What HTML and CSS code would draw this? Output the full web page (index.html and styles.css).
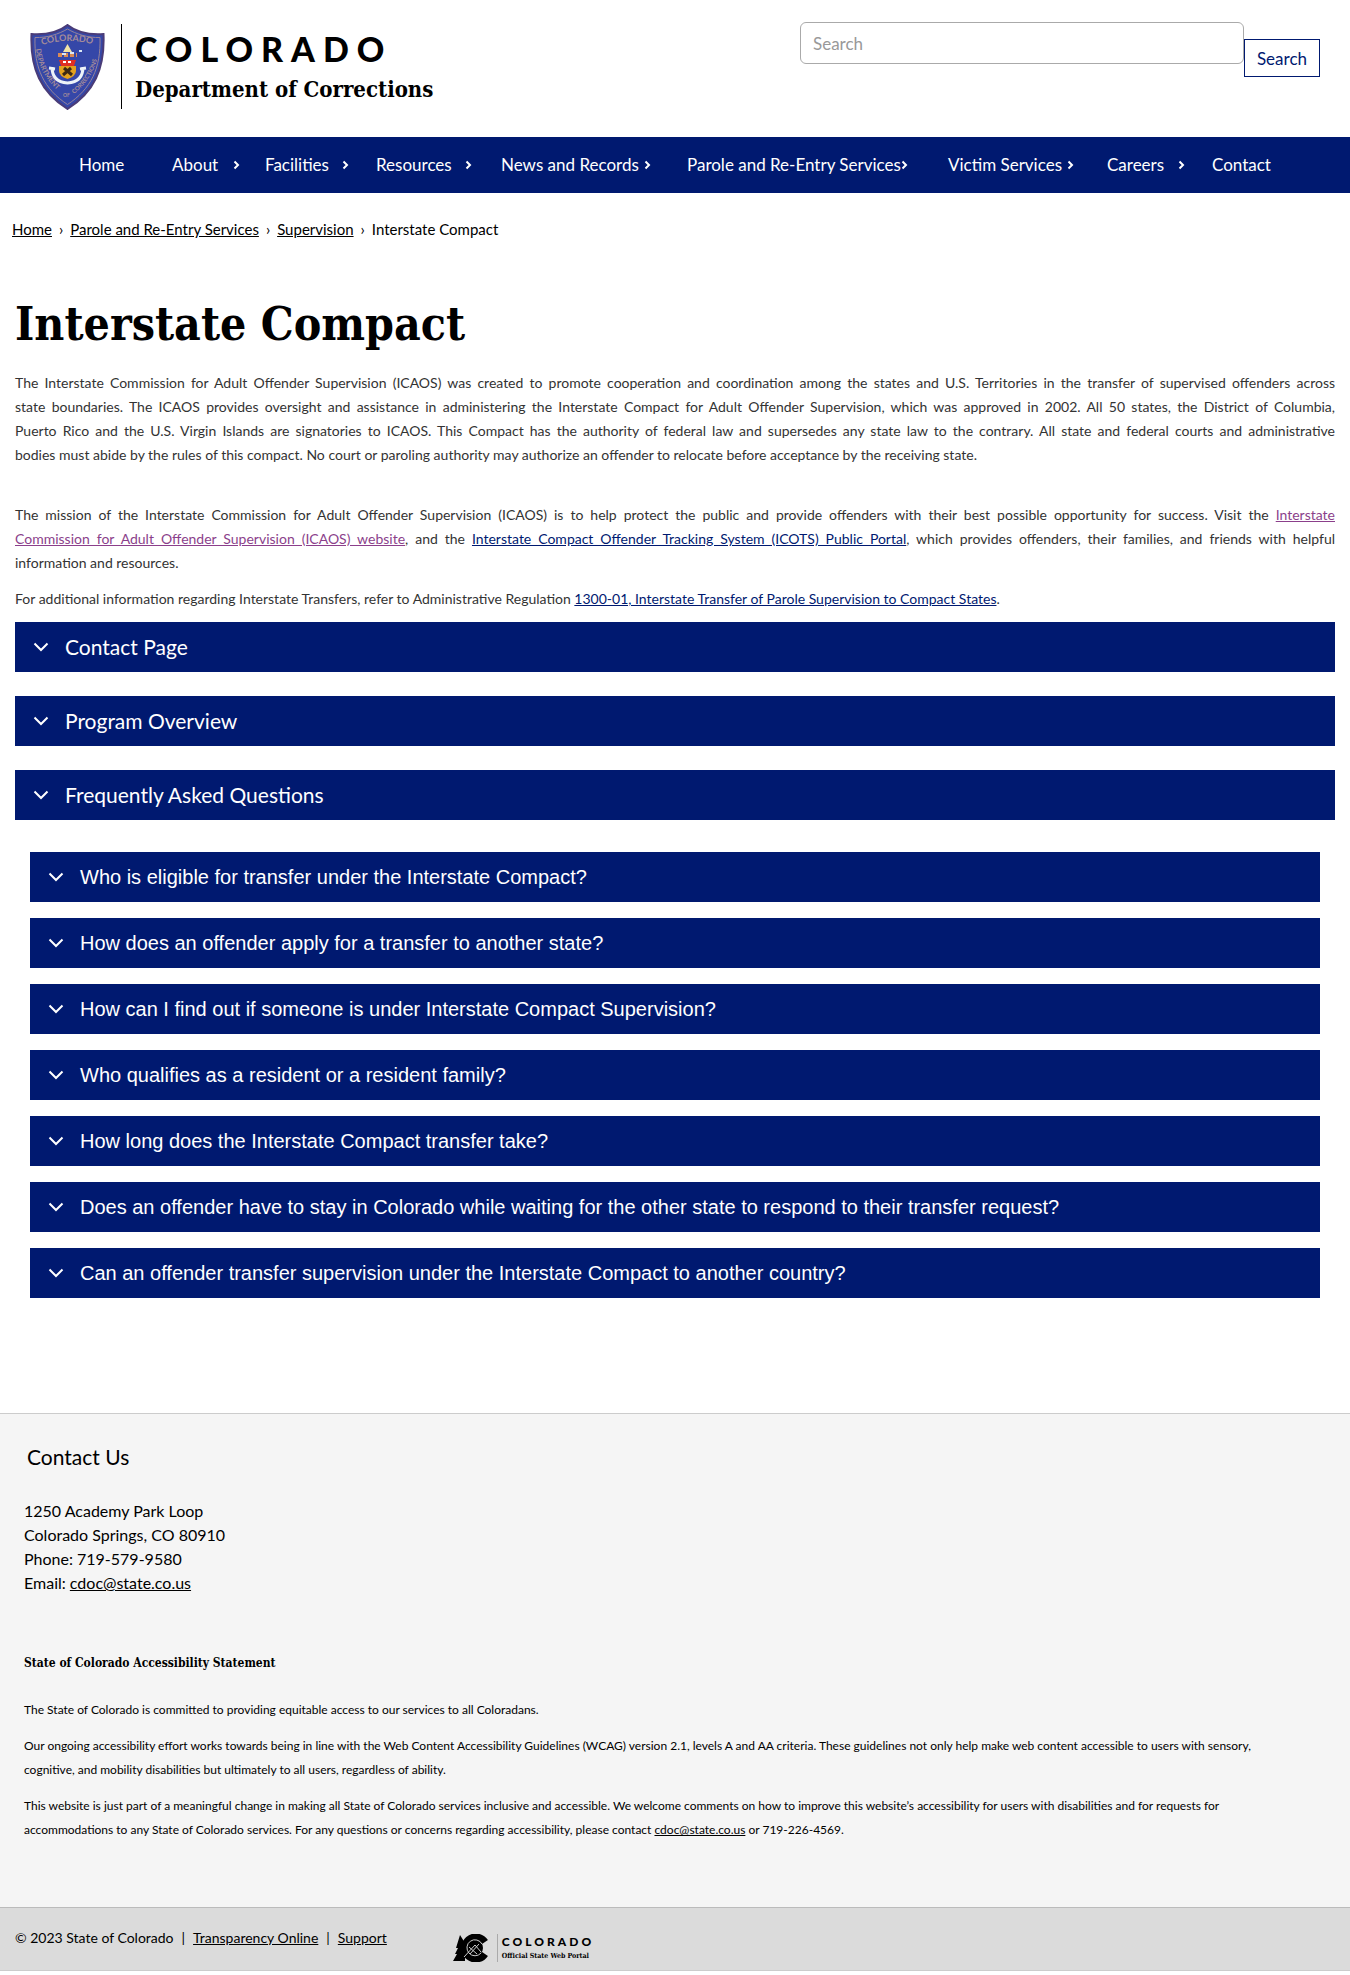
FILE: index.html
```html
<!DOCTYPE html>
<html lang="en">
<head>
<meta charset="utf-8">
<meta name="viewport" content="width=device-width, initial-scale=1">
<title>Interstate Compact | Department of Corrections</title>
<link rel="stylesheet" href="styles.css">
</head>
<body>
<svg class="defs" aria-hidden="true">
  <symbol id="right" viewBox="0 0 7 10"><path d="M1.500 1.500 5 5 1.500 8.500" fill="none" stroke="currentColor" stroke-width="2"/></symbol>
  <symbol id="down" viewBox="0 0 16 10"><path d="M1.500 1.500 8 8 14.500 1.500" fill="none" stroke="currentColor" stroke-width="2"/></symbol>
</svg>
<header class="site-header">
  <a class="brand" href="#">
    <svg class="shield" viewBox="0 0 75 86" role="img" aria-label="Department of Corrections badge">
      <path d="M37.500 1C45 7 58 11 73.500 10 75 45 64 68 37.500 85 11 68 0 45 1.500 10 17 11 30 7 37.500 1Z" fill="#3547a8" stroke="#4a3c78" stroke-width="2"/>
      <path d="M37.500 5C46 10 58 14 70 13.500 71 44 61 65 37.500 80.500 14 65 4 44 5 13.500 17 14 29 10 37.500 5Z" fill="none" stroke="#96839a"/>
      <path id="arc-top" d="M12 21Q37.500 13 65 21" fill="none"/>
      <path id="arc-left" d="M6 25Q9 52 32 70" fill="none"/>
      <path id="arc-right" d="M44 70Q66 52 69 25" fill="none"/>
      <g class="shield-text">
        <text font-size="9"><textPath href="#arc-top">COLORADO</textPath></text>
        <text font-size="7"><textPath href="#arc-left">DEPARTMENT</textPath></text>
        <text font-size="6"><textPath href="#arc-right">CORRECTIONS</textPath></text>
        <text font-size="5" x="33" y="73">OF</text>
      </g>
      <path d="M37.500 20 42 28H33Z" fill="#f2e3a6"/>
      <path d="M28 31h19" stroke="#d98a55" stroke-width="4" stroke-dasharray="4 2"/>
      <path d="M32 30h4M40 29h4M49 27h3" stroke="#dce8f5" stroke-width="2"/>
      <path d="M29 36h17l-2 6H31Z" fill="#e02f22"/>
      <path d="M33 38h10" stroke="#fff" stroke-width="2" stroke-dasharray="3 2"/>
      <path d="M29 42h17v5q0 5-8.500 8Q29 52 29 47Z" fill="#e3a21e"/>
      <path d="M33 51l8-7M42 51l-8-7" stroke="#3c2a14" stroke-width="3"/>
      <path d="M22 43q0 15 15.500 16Q53 58 53 43M19 44l6 1M50 45l6-1" fill="none" stroke="#edf3f8" stroke-width="3"/>
    </svg>
    <span class="brand-text">
      <span class="wordmark">COLORADO</span>
      <span class="department">Department of Corrections</span>
    </span>
  </a>
  <form class="search">
    <input type="search" placeholder="Search" aria-label="Search">
    <button type="button">Search</button>
  </form>
</header>
<nav class="main-nav" aria-label="Main">
  <ul>
    <li><a href="#">Home</a></li>
    <li><a href="#">About</a><svg><use href="#right"/></svg></li>
    <li><a href="#">Facilities</a><svg><use href="#right"/></svg></li>
    <li><a href="#">Resources</a><svg><use href="#right"/></svg></li>
    <li><a href="#">News and Records</a><svg><use href="#right"/></svg></li>
    <li><a href="#">Parole and Re-Entry Services</a><svg><use href="#right"/></svg></li>
    <li><a href="#">Victim Services</a><svg><use href="#right"/></svg></li>
    <li><a href="#">Careers</a><svg><use href="#right"/></svg></li>
    <li><a href="#">Contact</a></li>
  </ul>
</nav>
<nav class="breadcrumb" aria-label="Breadcrumb">
  <a href="#">Home</a><span>›</span><a href="#">Parole and Re-Entry Services</a><span>›</span><a href="#">Supervision</a><span>›</span>Interstate Compact
</nav>
<main>
  <h1>Interstate Compact</h1>
  <div class="copy">
    <p class="lead">The Interstate Commission for Adult Offender Supervision (ICAOS) was created to promote cooperation and coordination among the states and U.S. Territories in the transfer of supervised offenders across state&nbsp;boundaries. The ICAOS provides oversight and assistance in administering the Interstate Compact for Adult Offender Supervision, which was approved in 2002. All 50 states, the District of Columbia, Puerto&nbsp;Rico&nbsp;and&nbsp;the U.S. Virgin Islands are signatories to ICAOS. This Compact has the authority of federal law and supersedes any state law to the contrary. All state and federal courts and administrative bodies&nbsp;must&nbsp;abide by the rules of this compact. No court or paroling authority may authorize an offender to relocate before acceptance by the receiving state.</p>
    <p>The mission of the Interstate Commission for Adult Offender Supervision (ICAOS) is to help protect the public and provide offenders with their best possible opportunity for success. Visit the <a class="seen" href="#">Interstate Commission&nbsp;for&nbsp;Adult Offender Supervision (ICAOS) website</a>, and the <a href="#">Interstate Compact Offender Tracking System (ICOTS) Public Portal</a>, which provides offenders, their families, and friends with helpful information&nbsp;and&nbsp;resources.</p>
    <p>For additional information regarding Interstate Transfers, refer to Administrative Regulation <a href="#">1300-01, Interstate Transfer of Parole Supervision to Compact States</a>.</p>
  </div>
  <div class="accordion">
    <button type="button"><svg><use href="#down"/></svg>Contact Page</button>
    <button type="button"><svg><use href="#down"/></svg>Program Overview</button>
    <button type="button" aria-expanded="true"><svg><use href="#down"/></svg>Frequently Asked Questions</button>
  </div>
  <div class="accordion faq">
    <button type="button"><svg><use href="#down"/></svg>Who is eligible for transfer under the Interstate Compact?</button>
    <button type="button"><svg><use href="#down"/></svg>How does an offender apply for a transfer to another state?</button>
    <button type="button"><svg><use href="#down"/></svg>How can I find out if someone is under Interstate Compact Supervision?</button>
    <button type="button"><svg><use href="#down"/></svg>Who qualifies as a resident or a resident family?</button>
    <button type="button"><svg><use href="#down"/></svg>How long does the Interstate Compact transfer take?</button>
    <button type="button"><svg><use href="#down"/></svg>Does an offender have to stay in Colorado while waiting for the other state to respond to their transfer request?</button>
    <button type="button"><svg><use href="#down"/></svg>Can an offender transfer supervision under the Interstate Compact to another country?</button>
  </div>
</main>
<footer>
  <div class="contact">
    <h2>Contact Us</h2>
    <address>1250 Academy Park Loop<br>Colorado Springs, CO 80910<br>Phone: 719-579-9580<br>Email: <a href="#">cdoc@state.co.us</a></address>
    <h3>State of Colorado Accessibility Statement</h3>
    <p>The State of Colorado is committed to providing equitable access to our services to all Coloradans.</p>
    <p>Our ongoing accessibility effort works towards being in line with the Web Content Accessibility Guidelines (WCAG) version 2.1, levels A and AA criteria. These guidelines not only help make web content accessible to users with sensory, cognitive, and mobility disabilities but ultimately to all users, regardless of ability.</p>
    <p>This website is just part of a meaningful change in making all State of Colorado services inclusive and accessible. We welcome comments on how to improve this website’s accessibility for users with disabilities and for requests for accommodations to any State of Colorado services. For any questions or concerns regarding accessibility, please contact <a href="#">cdoc@state.co.us</a> or 719-226-4569.</p>
  </div>
  <div class="legal">
    <div class="legal-links"><span>© 2023 State of Colorado</span><span>|</span><a href="#">Transparency Online</a><span>|</span><a href="#">Support</a></div>
    <a class="portal" href="#">
      <svg class="portal-mark" viewBox="0 0 36 28" role="img" aria-label="Colorado emblem">
        <path d="M0 27 4 20H2L5 14H3L7 1 12 9V27Z"/>
        <path d="M32 8A11 11 0 1 0 32 20" fill="none" stroke="#000" stroke-width="7"/>
        <circle cx="22" cy="14" r="8"/>
        <path d="M11 23 22 11 28 18M17 20 26 10M16 13 24 20M29 10A8 8 0 1 0 28 19" fill="none" stroke="#ccc" stroke-width="1"/>
      </svg>
      <span class="portal-text"><span class="portal-name">COLORADO</span><span class="portal-tag">Official State Web Portal</span></span>
    </a>
  </div>
</footer>
</body>
</html>
```
FILE: styles.css
```css
:root {
  --navy: #001970;
  --sans: Lato, "Open Sans", sans-serif;
  --slab: "DejaVu Serif Condensed", "DejaVu Serif", serif;
}

* { box-sizing: border-box; }

body {
  margin: 0;
  background: #fff;
  color: #000;
  font: 14px/24px var(--sans);
}

p, h1, h2, h3, ul { margin: 0; padding: 0; }
a { color: inherit; }
.defs { display: none; }

.site-header {
  display: flex;
  justify-content: space-between;
  align-items: flex-start;
  height: 137px;
  padding: 22px 30px 0;
}

.brand {
  display: flex;
  gap: 16px;
  padding-top: 2px;
  text-decoration: none;
}
.shield { width: 75px; height: 86px; }
.shield-text { fill: #a58c98; font-weight: 700; }
.brand-text {
  display: flex;
  flex-direction: column;
  gap: 8px;
  height: 85px;
  padding: 5px 0 0 13px;
  border-left: 1px solid #000;
}
.wordmark { font-size: 34px; line-height: 40px; font-weight: 900; letter-spacing: 8px; }
.department { font: 700 22px/24px var(--slab); }

.search { display: flex; width: 520px; }
.search input {
  flex: 1;
  min-width: 0;
  height: 42px;
  padding: 0 12px;
  border: 1px solid #aaa;
  border-radius: 6px;
  font: 17px var(--sans);
}
.search input::placeholder { color: #999; }
.search button {
  height: 38px;
  margin-top: 17px;
  padding: 0 12px;
  border: 1px solid var(--navy);
  background: #fff;
  color: var(--navy);
  font: 17px var(--sans);
}

.main-nav { background: var(--navy); color: #fff; padding: 0 54px 0 79px; }
.main-nav ul {
  display: grid;
  grid-template-columns: 93fr 93fr 111fr 125fr 186fr 261fr 159fr 105fr 84fr;
  height: 56px;
  list-style: none;
}
.main-nav li {
  display: flex;
  align-items: center;
  justify-content: space-between;
  min-width: 0;
  padding-right: calc(14px + 12%);
  font-size: 17px;
  white-space: nowrap;
}
.main-nav a { text-decoration: none; }
.main-nav svg { width: 7px; height: 10px; flex: none; }

.breadcrumb { padding: 24px 12px 0; font-size: 15px; }
.breadcrumb span { margin: 0 7px; }

main { padding: 0 15px 115px; }
h1 { padding: 53px 0 17px; font: 700 46px/60px var(--slab); }
.copy { display: grid; gap: 12px; color: #333; text-align: justify; }
.copy .lead { margin-bottom: 24px; }
.copy a { color: var(--navy); }
.copy a.seen { color: #8b3f8b; }

.accordion { display: grid; gap: 24px; padding-top: 11px; }
.accordion button {
  display: flex;
  align-items: center;
  gap: 16px;
  min-height: 50px;
  padding: 0 18px;
  border: 0;
  background: var(--navy);
  color: #fff;
  font: 21px/24px var(--sans);
  text-align: left;
}
.accordion svg { width: 16px; height: 10px; flex: none; }
.faq { gap: 16px; padding: 32px 15px 0; }
.faq button { font: 20px/24px "Liberation Sans", Arial, sans-serif; }

.contact {
  padding: 31px 24px 65px;
  border-top: 1px solid #ccc;
  background: #f5f5f5;
  font-size: 12px;
}
h2 { padding-left: 3px; font: 400 21px/24px var(--sans); }
address { padding: 30px 0 56px; font: 16px/24px var(--sans); }
h3 { font: 700 12px/24px var(--slab); margin-bottom: 23px; }
.contact p { padding-right: 32px; }
.contact p + p { margin-top: 12px; }

.legal {
  display: flex;
  gap: 66px;
  padding: 18px 15px 8px;
  border-top: 1px solid #bbb;
  border-bottom: 1px solid #ccc;
  background: #dbdbdb;
}
.legal-links { display: flex; gap: 8px; }
.portal { display: flex; gap: 8px; align-items: center; padding-top: 8px; text-decoration: none; }
.portal-mark { width: 36px; height: 28px; }
.portal-text { display: flex; flex-direction: column; padding-left: 4px; border-left: 1px solid #aaa; }
.portal-name { font-size: 12px; line-height: 16px; font-weight: 900; letter-spacing: 3px; }
.portal-tag { font: 700 7px/12px var(--slab); }
```
